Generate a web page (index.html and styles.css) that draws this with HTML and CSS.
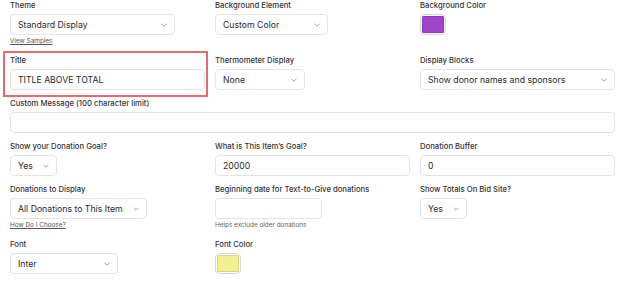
FILE: index.html
```html
<!DOCTYPE html>
<html>
<head>
<meta charset="utf-8">
<link rel="stylesheet" href="styles.css">
</head>
<body>
<form class="form">
  <div class="field">
    <label class="label">Theme</label>
    <div class="select w-165"><span>Standard Display</span><svg class="chev" viewBox="0 0 10 6"><path d="M1 1l4 4 4-4"/></svg></div>
    <a class="link">View Samples</a>
  </div>
  <div class="field">
    <label class="label">Background Element</label>
    <div class="select w-113"><span>Custom Color</span><svg class="chev" viewBox="0 0 10 6"><path d="M1 1l4 4 4-4"/></svg></div>
  </div>
  <div class="field">
    <label class="label">Background Color</label>
    <div class="swatch"><span class="swatch-fill purple"></span></div>
  </div>

  <div class="field highlighted">
    <label class="label">Title</label>
    <div class="input"><span>TITLE ABOVE TOTAL</span></div>
  </div>
  <div class="field">
    <label class="label">Thermometer Display</label>
    <div class="select w-90"><span>None</span><svg class="chev" viewBox="0 0 10 6"><path d="M1 1l4 4 4-4"/></svg></div>
  </div>
  <div class="field">
    <label class="label">Display Blocks</label>
    <div class="select"><span>Show donor names and sponsors</span><svg class="chev" viewBox="0 0 10 6"><path d="M1 1l4 4 4-4"/></svg></div>
  </div>

  <div class="field span-3">
    <label class="label">Custom Message (100 character limit)</label>
    <div class="input"></div>
  </div>

  <div class="field">
    <label class="label">Show your Donation Goal?</label>
    <div class="select w-47"><span>Yes</span><svg class="chev" viewBox="0 0 10 6"><path d="M1 1l4 4 4-4"/></svg></div>
  </div>
  <div class="field">
    <label class="label">What is This Item’s Goal?</label>
    <div class="input"><span>20000</span></div>
  </div>
  <div class="field">
    <label class="label">Donation Buffer</label>
    <div class="input"><span>0</span></div>
  </div>

  <div class="field">
    <label class="label">Donations to Display</label>
    <div class="select w-137"><span>All Donations to This Item</span><svg class="chev" viewBox="0 0 10 6"><path d="M1 1l4 4 4-4"/></svg></div>
    <a class="link">How Do I Choose?</a>
  </div>
  <div class="field">
    <label class="label">Beginning date for Text-to-Give donations</label>
    <div class="input w-106"></div>
    <span class="help">Helps exclude older donations</span>
  </div>
  <div class="field">
    <label class="label">Show Totals On Bid Site?</label>
    <div class="select w-47"><span>Yes</span><svg class="chev" viewBox="0 0 10 6"><path d="M1 1l4 4 4-4"/></svg></div>
  </div>

  <div class="field">
    <label class="label">Font</label>
    <div class="select w-108"><span>Inter</span><svg class="chev" viewBox="0 0 10 6"><path d="M1 1l4 4 4-4"/></svg></div>
  </div>
  <div class="field">
    <label class="label">Font Color</label>
    <div class="swatch"><span class="swatch-fill yellow"></span></div>
  </div>
</form>
</body>
</html>
```
FILE: styles.css
```css
html, body {
  margin: 0;
  padding: 0;
  background: #ffffff;
}
body {
  font-family: Inter, "Noto Sans", sans-serif;
  color: #2b2b2b;
}
.form {
  display: grid;
  grid-template-columns: 195px 195px 195px;
  column-gap: 10px;
  row-gap: 8px;
  padding: 0 0 0 10px;
}
.field {
  display: flex;
  flex-direction: column;
  align-items: flex-start;
  position: relative;
}
.span-3 {
  grid-column: 1 / 4;
}
.highlighted::after {
  content: "";
  position: absolute;
  top: -4px;
  left: -7px;
  right: -3px;
  bottom: -7px;
  border: 2px solid #e86b6b;
  pointer-events: none;
}
.label {
  font-size: 7.7px;
  font-weight: 500;
  line-height: 12px;
  margin-bottom: 2px;
  color: #333333;
}
.select, .input {
  box-sizing: border-box;
  height: 21px;
  width: 100%;
  border: 1px solid #e3e4e8;
  border-radius: 4px;
  display: flex;
  align-items: center;
  justify-content: space-between;
  padding: 0 7px 0 7px;
  font-size: 8.7px;
  color: #2a2a2a;
  background: #fff;
  white-space: nowrap;
}
.chev {
  width: 6px;
  height: 4px;
  flex: none;
}
.chev path {
  fill: none;
  stroke: #777;
  stroke-width: 1.2;
}
.w-165 { width: 165px; }
.w-113 { width: 113px; }
.w-90 { width: 90px; }
.w-47 { width: 47px; }
.w-137 { width: 137px; }
.w-106 { width: 107px; }
.w-108 { width: 108px; }
.link {
  font-size: 6.4px;
  line-height: 10px;
  margin: 1px 0 1px;
  color: #555;
  text-decoration: underline;
}
.help {
  font-size: 6.4px;
  line-height: 10px;
  margin-top: 1px;
  color: #666;
}
.swatch {
  box-sizing: border-box;
  width: 26px;
  height: 21px;
  border: 1.5px solid #d6d7db;
  border-radius: 4px;
  padding: 1px;
  display: flex;
}
.swatch-fill {
  flex: 1;
  border-radius: 1px;
}
.purple { background: #a043cf; border: 1px solid #8d3ab8; }
.yellow { background: #f3f08f; border: 1px solid #d9d488; }
```
